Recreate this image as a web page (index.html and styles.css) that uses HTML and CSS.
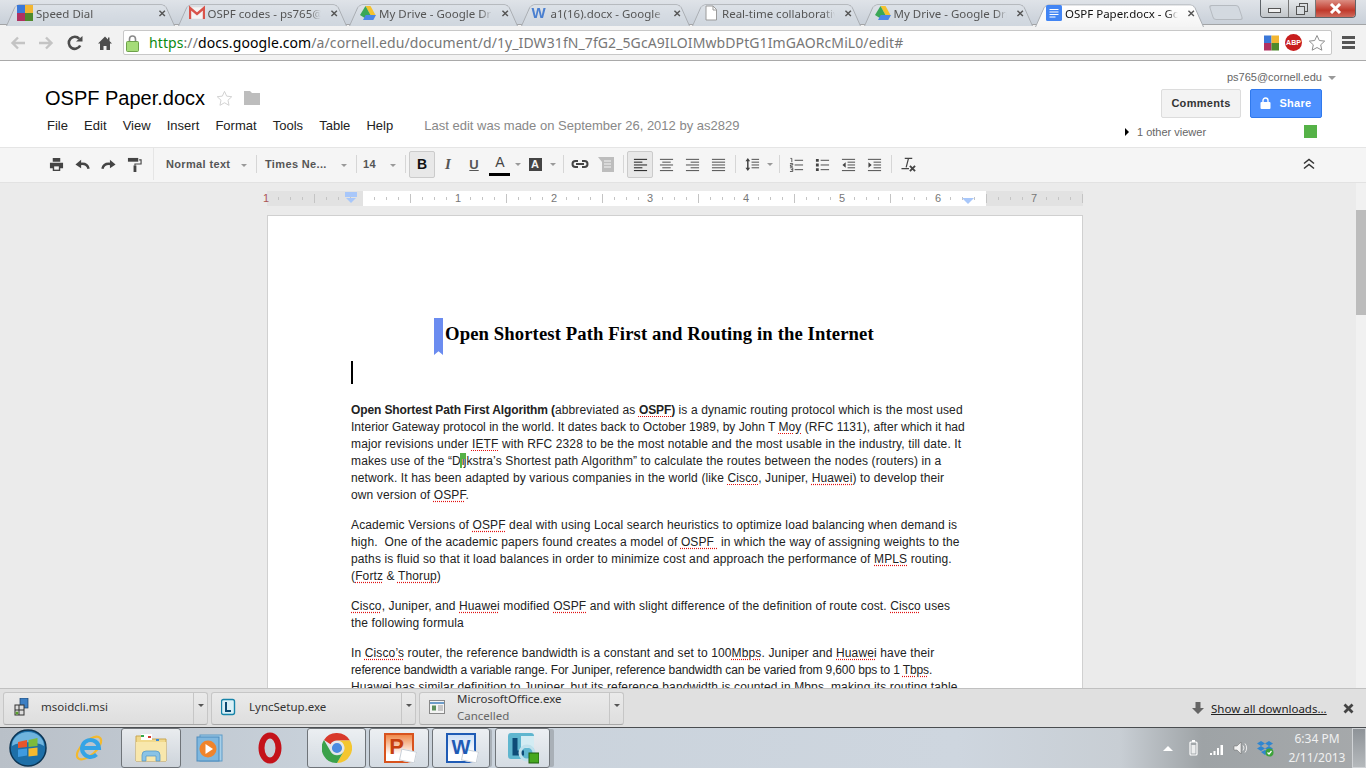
FILE: index.html
```html
<!DOCTYPE html>
<html lang="en">
<head>
    <meta charset="UTF-8">
    <title>OSPF Paper.docx - Google Drive</title>
    <link rel="stylesheet" href="styles.css">
</head>
<body>
    <!-- browser tabs -->
    <div class="tabstrip">
        <div class="tab">
            <svg class="favicon" viewBox="0 0 16 16"><rect x="0" y="0" width="8" height="8" fill="#3b78d8"/><rect x="8" y="0" width="8" height="8" fill="#f2b632"/><rect x="0" y="8" width="8" height="8" fill="#b03060"/><rect x="8" y="8" width="8" height="8" fill="#4f8a2c"/></svg>
            <span class="tab-title">Speed Dial</span>
            <span class="tab-close">✕</span>
        </div>
        <div class="tab">
            <svg class="favicon" viewBox="0 0 16 16"><rect x="0" y="2" width="16" height="12" fill="#f4f4f4" stroke="#d8d8d8" stroke-width=".5"/><path d="M1 14V3l7 6 7-6v11" fill="none" stroke="#d9534a" stroke-width="2.4"/></svg>
            <span class="tab-title">OSPF codes - ps765@</span>
            <span class="tab-close">✕</span>
        </div>
        <div class="tab">
            <svg class="favicon" viewBox="0 0 16 16"><path d="M5.500 1h5l5 9h-5z" fill="#f4c22e"/><path d="M5.500 1l5 9-2.700 5-7.800-5z" fill="#3aa757"/><path d="M3 15l2.700-5H16l-2.700 5z" fill="#4a86e8"/></svg>
            <span class="tab-title">My Drive - Google Dri</span>
            <span class="tab-close">✕</span>
        </div>
        <div class="tab">
            <span class="favicon word-fav">W</span>
            <span class="tab-title">a1(16).docx - Google</span>
            <span class="tab-close">✕</span>
        </div>
        <div class="tab">
            <svg class="favicon" viewBox="0 0 16 16"><path d="M3 1h7l3.500 3.500V15H3z" fill="#fff" stroke="#9a9a9a"/><path d="M10 1v4h3.500" fill="none" stroke="#9a9a9a"/></svg>
            <span class="tab-title">Real-time collaborativ</span>
            <span class="tab-close">✕</span>
        </div>
        <div class="tab">
            <svg class="favicon" viewBox="0 0 16 16"><path d="M5.500 1h5l5 9h-5z" fill="#f4c22e"/><path d="M5.500 1l5 9-2.700 5-7.800-5z" fill="#3aa757"/><path d="M3 15l2.700-5H16l-2.700 5z" fill="#4a86e8"/></svg>
            <span class="tab-title">My Drive - Google Dri</span>
            <span class="tab-close">✕</span>
        </div>
        <div class="tab tab-active">
            <svg class="favicon" viewBox="0 0 16 16"><rect width="16" height="16" rx="1.500" fill="#4285f4"/><path d="M3.500 4.500h9M3.500 7h9M3.500 9.500h9M3.500 12h6" stroke="#fff" stroke-width="1"/></svg>
            <span class="tab-title">OSPF Paper.docx - Go</span>
            <span class="tab-close">✕</span>
        </div>
        <div class="newtab"></div>
        <div class="winctl">
            <div class="win-btn win-min"><span class="min-glyph"></span></div>
            <div class="win-btn win-max">
                <svg width="12" height="12" viewBox="0 0 12 12"><rect x="3.500" y=".5" width="8" height="8" fill="none" stroke="#555"/><rect x=".5" y="3.500" width="8" height="8" fill="#d8dce0" stroke="#555"/></svg>
            </div>
            <div class="win-btn win-close">
                <svg width="13" height="11" viewBox="0 0 13 11"><path d="M2 1l9 9M11 1l-9 9" stroke="#fff" stroke-width="3"/></svg>
            </div>
        </div>
    </div>

    <!-- address bar -->
    <div class="browserbar">
        <svg class="nav-icon" viewBox="0 0 16 16"><path d="M15 8H3M8 2.500L2.500 8 8 13.500" fill="none" stroke="#c4c4c4" stroke-width="2.400"/></svg>
        <svg class="nav-icon" viewBox="0 0 16 16"><path d="M1 8h12M8 2.500L13.500 8 8 13.500" fill="none" stroke="#c4c4c4" stroke-width="2.400"/></svg>
        <svg class="nav-icon" viewBox="0 0 16 16"><path d="M13.200 10.500A6 6 0 1 1 12.300 3.800" fill="none" stroke="#4d4d4d" stroke-width="2.600"/><path d="M9 6.500h6.500V1z" fill="#4d4d4d"/></svg>
        <svg class="nav-icon" viewBox="0 0 16 16"><path d="M8 1.500L1 8.500h2V15h3.500v-4h3v4H13V8.500h2L12.500 6V2.500H11v2z" fill="#4d4d4d"/></svg>
        <div class="omnibox">
            <svg class="lock" width="13" height="18" viewBox="0 0 13 18"><path d="M3.500 8V5a3 3 0 0 1 6 0v3" fill="none" stroke="#8a8a8a" stroke-width="1.600"/><rect x=".5" y="7.500" width="12" height="10" rx="1" fill="#a5dc78" stroke="#6da14a"/></svg>
            <span class="url"><span class="url-https">https</span><span class="url-rest">://</span><span class="url-host">docs.google.com</span><span class="url-rest">/a/cornell.edu/document/d/1y_IDW31fN_7fG2_5GcA9ILOIMwbDPtG1ImGAORcMiL0/edit#</span></span>
            <div class="omni-icons">
                <svg width="15" height="16" viewBox="0 0 16 16"><rect x="0" y="0" width="8" height="8" fill="#3b78d8"/><rect x="8" y="0" width="8" height="8" fill="#f2b632"/><rect x="0" y="8" width="8" height="8" fill="#b03060"/><rect x="8" y="8" width="8" height="8" fill="#4f8a2c"/></svg>
                <span class="abp">ABP</span>
                <svg width="18" height="18" viewBox="0 0 18 18"><path d="M9 1.500l2.300 5 5.400.6-4 3.700 1.100 5.400L9 13.500l-4.800 2.700 1.100-5.400-4-3.700 5.400-.6z" fill="#fff" stroke="#8f8f8f"/></svg>
            </div>
        </div>
        <div class="hamburger"><i></i><i></i><i></i></div>
    </div>

    <!-- docs title area -->
    <div class="docs-header">
        <div class="docs-left">
            <div class="title-row">
                <span class="doc-title">OSPF Paper.docx</span>
                <svg class="title-star" width="17" height="17" viewBox="0 0 18 18"><path d="M9 1.500l2.300 5 5.400.6-4 3.700 1.100 5.400L9 13.500l-4.800 2.700 1.100-5.400-4-3.700 5.400-.6z" fill="#fff" stroke="#cfcfcf"/></svg>
                <svg class="title-folder" width="16" height="14" viewBox="0 0 16 14"><path d="M0 0h6l2 2h8v12H0z" fill="#bdbdbd"/></svg>
            </div>
            <div class="menu">
                <span>File</span><span>Edit</span><span>View</span><span>Insert</span><span>Format</span><span>Tools</span><span>Table</span><span>Help</span>
                <span class="last-edit">Last edit was made on September 26, 2012 by as2829</span>
            </div>
        </div>
        <div class="docs-right">
            <div class="account">ps765@cornell.edu <span class="account-caret"></span></div>
            <div class="share-row">
                <button class="btn-comments">Comments</button>
                <button class="btn-share">
                    <svg width="11" height="12" viewBox="0 0 11 12"><path d="M3 6V3.500a2.500 2.500 0 0 1 5 0V6" fill="none" stroke="#fff" stroke-width="1.400"/><rect x=".5" y="5" width="10" height="7" rx="1" fill="#fff"/></svg>
                    Share
                </button>
            </div>
            <div class="viewers">
                <span class="viewer-label"><span class="viewer-arrow"></span>1 other viewer</span>
                <span class="viewer-swatch"></span>
            </div>
        </div>
    </div>

    <!-- formatting toolbar -->
    <div class="toolbar">
        <span class="tool"><svg viewBox="0 0 16 16"><path d="M4 1h8v4H4zM1 6h14v6h-3v3H4v-3H1z" fill="#444"/><path d="M5.500 10h5v3.500h-5z" fill="#f5f5f5"/></svg></span>
        <span class="tool"><svg viewBox="0 0 16 16"><path d="M14.500 12.500C13.500 8.500 10 6.500 5 7.500" fill="none" stroke="#444" stroke-width="2.600"/><path d="M.5 8L6.500 3v9z" fill="#444"/></svg></span>
        <span class="tool"><svg viewBox="0 0 16 16"><path d="M1.500 12.500C2.500 8.500 6 6.500 11 7.500" fill="none" stroke="#444" stroke-width="2.600"/><path d="M15.500 8L9.500 3v9z" fill="#444"/></svg></span>
        <span class="tool"><svg viewBox="0 0 16 16"><path d="M1 1h11v4H1z" fill="#444"/><path d="M13 3h2v4.500H8.500V9" fill="none" stroke="#444" stroke-width="1.200"/><rect x="7" y="9" width="3" height="7" fill="#444"/></svg></span>
        <span class="sep sep-paint"></span>

        <span class="drop drop-style">Normal text<i class="caret"></i></span>
        <span class="sep"></span>
        <span class="drop drop-font">Times Ne...<i class="caret"></i></span>
        <span class="sep"></span>
        <span class="drop drop-size">14<i class="caret"></i></span>
        <span class="sep"></span>

        <span class="tool tool-on tool-bold"><b class="glyph-b">B</b></span>
        <span class="tool"><i class="glyph-i">I</i></span>
        <span class="tool"><span class="glyph-u">U</span></span>
        <span class="tool"><span class="glyph-a">A</span><span class="color-bar"></span></span>
        <i class="caret caret-tool"></i>
        <span class="tool"><span class="glyph-hl">A</span></span>
        <i class="caret caret-tool caret-wide"></i>
        <span class="sep sep-five"></span>

        <span class="tool tool-first"><svg viewBox="0 0 18 10" class="icon-wide"><path d="M7 2H4.500a3 3 0 0 0 0 6H7M11 2h2.500a3 3 0 0 1 0 6H11M5 5h8" fill="none" stroke="#444" stroke-width="2"/></svg></span>
        <span class="tool"><svg class="icon-comment" viewBox="0 0 16 16"><path d="M0 1h16v15H4V6z" fill="#bdbdbd"/><path d="M6 5h7M6 8h7M6 11h7" stroke="#f5f5f5"/></svg></span>
        <span class="sep sep-four"></span>

        <span class="tool tool-on tool-align"><svg viewBox="0 0 16 16"><path d="M1 2.500h14M1 5.500h9M1 8.500h14M1 11.500h9M1 14.500h14" stroke="#111"/></svg></span>
        <span class="tool"><svg viewBox="0 0 16 16"><path d="M1 2.500h14M3.500 5.500h9M1 8.500h14M3.500 11.500h9M1 14.500h14" stroke="#444"/></svg></span>
        <span class="tool"><svg viewBox="0 0 16 16"><path d="M1 2.500h14M6 5.500h9M1 8.500h14M6 11.500h9M1 14.500h14" stroke="#444"/></svg></span>
        <span class="tool"><svg viewBox="0 0 16 16"><path d="M1 2.500h14M1 5.500h14M1 8.500h14M1 11.500h14M1 14.500h14" stroke="#444"/></svg></span>
        <span class="sep sep-four"></span>

        <span class="tool tool-first"><svg viewBox="0 0 16 16"><path d="M3 1L.5 4.500h5zM3 15L.5 11.500h5z" fill="#444"/><path d="M3 4v8" stroke="#444" stroke-width="1.600"/><path d="M7 2.500h8M7 5.500h8M7 8.500h8M7 11.500h8" stroke="#444"/></svg></span>
        <i class="caret caret-tool"></i>
        <span class="sep sep-five"></span>

        <span class="tool tool-first"><svg viewBox="0 0 16 16"><path d="M6 3.500h9M6 8.500h9M6 13.500h9" stroke="#444"/><path d="M1.500 1.500h1.500v4M1 7h3v1.500H1.500v1.500H4M1 11.500h3v4H1M2 13.500h2" fill="none" stroke="#444" stroke-width=".9"/></svg></span>
        <span class="tool"><svg viewBox="0 0 16 16"><path d="M6 3.500h9M6 8.500h9M6 13.500h9" stroke="#444"/><path d="M1 2h3v3H1zM1 7h3v3H1zM1 12h3v3H1z" fill="#444"/></svg></span>
        <span class="tool"><svg viewBox="0 0 16 16"><path d="M1 2.500h14M7 5.500h8M7 8.500h8M7 11.500h8M1 14.500h14" stroke="#444"/><path d="M5 5.500v6L1.500 8.500z" fill="#444"/></svg></span>
        <span class="tool"><svg viewBox="0 0 16 16"><path d="M1 2.500h14M7 5.500h8M7 8.500h8M7 11.500h8M1 14.500h14" stroke="#444"/><path d="M1.500 5.500v6L5 8.500z" fill="#444"/></svg></span>
        <span class="sep sep-four"></span>

        <span class="tool tool-clear"><svg viewBox="0 0 16 16"><path d="M4 1.500h8M8 1.500L5.500 11M.5 12.500h8" fill="none" stroke="#444" stroke-width="1.300"/><path d="M9.500 9.500l5.500 5.500M15 9.500l-5.500 5.500" stroke="#444" stroke-width="2"/></svg></span>

        <span class="tool tool-collapse"><svg viewBox="0 0 12 12"><path d="M1 5.500l5-4 5 4M1 10.500l5-4 5 4" fill="none" stroke="#333" stroke-width="1.500"/></svg></span>
    </div>

    <!-- document -->
    <div class="editor">
        <div class="canvas">
            <div class="ruler">
                <div class="ruler-white"></div>
                <div class="ruler-ticks"></div>
                <div class="ruler-nums">
                    <span class="num-red">1</span><span class="num-zero"></span><span>1</span><span>2</span><span>3</span><span>4</span><span>5</span><span>6</span><span>7</span>
                </div>
                <svg class="marker marker-left" width="12" height="12" viewBox="0 0 12 12"><rect width="12" height="5" fill="#a8c7fa"/><path d="M1 6h10l-5 5z" fill="#a8c7fa"/></svg>
                <svg class="marker marker-right" width="12" height="6" viewBox="0 0 12 6"><path d="M0 0h12l-6 6z" fill="#a8c7fa"/></svg>
            </div>
            <div class="page">
                <h1 class="doc-heading"><span class="bookmark"></span>Open Shortest Path First and Routing in the Internet</h1>
                <div class="cursor"></div>
                <p><b class="lead">Open Shortest Path First Algorithm (</b>abbreviated as <b class="sp lead">OSPF</b><b class="lead">)</b> is a dynamic routing protocol which is the most used<br>
                <span class="ln-tight">Interior Gateway protocol in the world. It dates back to October 1989, by John T <span class="sp">Moy</span> (RFC 1131), after which it had</span><br>
                major revisions under <span class="sp">IETF</span> with RFC 2328 to be the most notable and the most usable in the industry, till date. It<br>
                makes use of the “D<span class="peer-cursor">i</span>jkstra’s Shortest path Algorithm” to calculate the routes between the nodes (routers) in a<br>
                network. It has been adapted by various companies in the world (like <span class="sp">Cisco</span>, Juniper, <span class="sp">Huawei</span>) to develop their<br>
                own version of <span class="sp">OSPF</span>.</p>
                <p>Academic Versions of <span class="sp">OSPF</span> deal with using Local search heuristics to optimize load balancing when demand is<br>
                high.&nbsp; One of the academic papers found creates a model of <span class="sp">OSPF&nbsp;</span> in which the way of assigning weights to the<br>
                paths is fluid so that it load balances in order to minimize cost and approach the performance of <span class="sp">MPLS</span> routing.<br>
                (<span class="sp">Fortz</span> &amp; <span class="sp">Thorup</span>)</p>
                <p><span class="sp">Cisco</span>, Juniper, and <span class="sp">Huawei</span> modified <span class="sp">OSPF</span> and with slight difference of the definition of route cost. <span class="sp">Cisco</span> uses<br>
                the following formula</p>
                <p>In <span class="sp">Cisco’s</span> router, the reference bandwidth is a constant and set to 100<span class="sp">Mbps</span>. Juniper and <span class="sp">Huawei</span> have their<br>
                <span class="ln-neg">reference bandwidth a variable range. For Juniper, reference bandwidth can be varied from 9,600 bps to 1 <span class="sp">Tbps</span>.</span><br>
                <span class="sp">Huawei</span> has similar definition to Juniper, but its reference bandwidth is counted in <span class="sp">Mbps</span>, making its routing table</p>
            </div>
        </div>
        <div class="scrollbar"><div class="scroll-thumb"></div></div>
    </div>

    <!-- chrome download shelf -->
    <div class="downloads">
        <div class="dl-item">
            <div class="dl-main">
                <svg class="dl-icon" width="16" height="18" viewBox="0 0 16 18"><rect x="7" y="0" width="8" height="10" fill="#3c7fc4" stroke="#1c3f66" stroke-width=".7"/><rect x="2" y="7" width="9" height="10" fill="#ddd" stroke="#333"/><path d="M6 7v10M2 12h9" stroke="#333"/><circle cx="4" cy="15" r="1.500" fill="#5aa02c"/></svg>
                <span class="dl-name">msoidcli.msi</span>
            </div>
            <div class="dl-arrow"><i class="caret caret-dark"></i></div>
        </div>
        <div class="dl-item">
            <div class="dl-main">
                <svg class="dl-icon" width="16" height="18" viewBox="0 0 16 18"><rect x=".5" y="1.500" width="13" height="15" rx="2" fill="#d9f0f7" stroke="#1683a8" stroke-width="1.400"/><path d="M5 4v9h5" fill="none" stroke="#0c4a72" stroke-width="2"/></svg>
                <span class="dl-name">LyncSetup.exe</span>
            </div>
            <div class="dl-arrow"><i class="caret caret-dark"></i></div>
        </div>
        <div class="dl-item">
            <div class="dl-main">
                <svg class="dl-icon" width="16" height="14" viewBox="0 0 16 14"><rect x=".5" y=".5" width="15" height="13" fill="#f4f4f4" stroke="#888"/><path d="M1 3h14" stroke="#6d9cc9" stroke-width="2"/><rect x="3" y="5.500" width="4" height="5" fill="#5e8f5e"/><path d="M9 6h5M9 8h5M9 10h5" stroke="#999"/></svg>
                <div class="dl-two">
                    <span class="dl-name">MicrosoftOffice.exe</span>
                    <span class="dl-status">Cancelled</span>
                </div>
            </div>
            <div class="dl-arrow"><i class="caret caret-dark"></i></div>
        </div>
        <svg class="show-all-icon" width="12" height="13" viewBox="0 0 12 13"><path d="M3.500 0h5v6H12l-6 6-6-6h3.500z" fill="#666"/></svg>
        <span class="show-all">Show all downloads...</span>
        <svg class="shelf-close" width="11" height="11" viewBox="0 0 11 11"><path d="M1.500 1.500l8 8M9.500 1.500l-8 8" stroke="#444" stroke-width="2.800"/></svg>
    </div>

    <!-- windows taskbar -->
    <div class="taskbar">
        <div class="orb">
            <svg width="38" height="38" viewBox="0 0 38 38">
                <circle cx="19" cy="19" r="18" fill="#1d6fa8" stroke="#0c3554" stroke-width="1.500"/>
                <path d="M3 17a16 14 0 0 1 32 0c-8-5-24-5-32 0z" fill="#6fb4de"/>
                <path d="M9 13l9-2v7l-9 1z" fill="#e8552b"/>
                <path d="M19.500 11l9-2 0 8-9 1z" fill="#7dbb3c"/>
                <path d="M9 20.500l9-1v7l-9 1.500z" fill="#3f9be0"/>
                <path d="M19.500 19.500l9-1v8l-9 1z" fill="#f6b92e"/>
            </svg>
        </div>
        <div class="task task-ie">
            <svg width="32" height="32" viewBox="0 0 32 32"><ellipse cx="15" cy="16" rx="15" ry="7" transform="rotate(-42 15 16)" fill="none" stroke="#f4b92d" stroke-width="2.200"/><path d="M8 16h17a8.500 8.500 0 1 0-2.500 6.500" fill="none" stroke="#35a4e6" stroke-width="4"/></svg>
        </div>
        <div class="task task-on task-explorer">
            <svg width="32" height="30" viewBox="0 0 32 30"><path d="M1 3h12l2 3h16v22H1z" fill="#f1d98c" stroke="#c9a651"/><path d="M6 1h11v6H6z" fill="#fff"/><rect x="6" y="2" width="3" height="2" fill="#35a84a"/><rect x="13" y="3" width="3" height="2" fill="#d23b2c"/><rect x="21" y="6" width="3" height="2" fill="#3b89d8"/><path d="M1 9h30v19H1z" fill="#f8e7ac"/><path d="M7 28v-6q0-4 4-4h10q4 0 4 4v6h-4v-5H11v5z" fill="#8ac3e6" stroke="#4f94c4" stroke-width=".7"/></svg>
        </div>
        <div class="task task-wmp">
            <svg width="30" height="30" viewBox="0 0 30 30"><rect x="4" y="2" width="22" height="26" fill="#a7cfe8" stroke="#5d9bc8"/><rect x="1" y="4" width="22" height="24" fill="#7fb7de" stroke="#4c8bbd"/><circle cx="12" cy="16" r="8.500" fill="#f0842c"/><path d="M9.500 11l7.500 5-7.500 5z" fill="#fff"/></svg>
        </div>
        <div class="task task-opera">
            <svg width="24" height="32" viewBox="0 0 24 32"><ellipse cx="12" cy="16" rx="8.500" ry="12.500" fill="none" stroke="#c4121a" stroke-width="6"/></svg>
        </div>
        <div class="task task-on task-chrome">
            <svg width="30" height="30" viewBox="0 0 30 30">
                <path d="M15 0a15 15 0 0 1 13 7.500H15a7.500 7.500 0 0 0-6.500 3.750L2 7A15 15 0 0 1 15 0z" fill="#d8392b"/>
                <path d="M28 7.500A15 15 0 0 1 15 30l6.500-11.250A7.500 7.500 0 0 0 21.500 11.250 7.500 7.500 0 0 0 15 7.500z" fill="#f4c630"/>
                <path d="M2 7l6.500 11.250A7.500 7.500 0 0 0 21.500 18.750L15 30A15 15 0 0 1 2 7z" fill="#3ba14a"/>
                <circle cx="15" cy="15" r="5.800" fill="#4c8be0" stroke="#e8e8e8" stroke-width="1.400"/>
            </svg>
        </div>
        <div class="task task-on task-ppt">
            <div class="app-tile tile-ppt"><span class="tile-letter">P</span></div>
        </div>
        <div class="task task-on task-word">
            <div class="app-tile tile-word"><span class="tile-letter">W</span></div>
        </div>
        <div class="task task-on task-lync">
            <svg width="32" height="32" viewBox="0 0 32 32"><rect x="1" y="1" width="26" height="26" rx="3" fill="#5fb6cf"/><rect x="14" y="4" width="13" height="12" fill="#d3ecf3"/><path d="M8 6v15h9" fill="none" stroke="#0e4c78" stroke-width="5"/><circle cx="20" cy="21" r="7" fill="none" stroke="#bfe1ec" stroke-width="3"/><rect x="22" y="21" width="10" height="10" fill="#46a820" stroke="#1d5c10"/></svg>
        </div>
        <div class="tray">
            <span class="tray-up"></span>
            <svg class="tray-battery" width="9" height="16" viewBox="0 0 9 16"><rect x="1" y="2" width="7" height="13" rx="1" fill="none" stroke="#fff" stroke-width="1.200"/><rect x="2.500" y="5" width="4" height="8.500" fill="#fff" opacity=".8"/><rect x="3" y="0" width="3" height="2" fill="#fff"/></svg>
            <svg width="16" height="13" viewBox="0 0 16 13"><path d="M1 11h2v2H1zM4.500 9h2v4h-2zM8 6h2v7H8zM11.500 3h2.500v10h-2.500z" fill="#fff"/></svg>
            <svg width="15" height="14" viewBox="0 0 15 14"><path d="M1 5h3l4-4v12L4 9H1z" fill="#f2f2f2" stroke="#666" stroke-width=".5"/><path d="M10 4.500a4 4 0 0 1 0 5M12 2.500a7 7 0 0 1 0 9" fill="none" stroke="#eee"/></svg>
            <svg width="18" height="17" viewBox="0 0 18 17"><path d="M5 1l4 2.500L5 6 1 3.500zM13 1l4 2.500L13 6 9 3.500zM5 6l4 2.500L5 11 1 8.500zM13 6l4 2.500L13 11 9 8.500z" fill="#2f86d0"/><path d="M5 12l4-2 4 2-4 3z" fill="#2f86d0"/><circle cx="13.500" cy="12.500" r="4" fill="#3da33a"/><path d="M11.500 12.500l1.500 1.500 2.500-3" fill="none" stroke="#fff" stroke-width="1.200"/></svg>
            <div class="clock"><span>6:34 PM</span><span>2/11/2013</span></div>
        </div>
        <div class="show-desktop"></div>
    </div>
</body>
</html>
```

FILE: styles.css
```css
* {
    box-sizing: border-box;
}

html, body {
    height: 100%;
}

body {
    margin: 0;
    width: 1366px;
    height: 768px;
    overflow: hidden;
    display: flex;
    flex-direction: column;
    font-family: "Liberation Sans", Arial, sans-serif;
    background-color: #fff;
}

/* browser tabs */
.tabstrip {
    height: 25px;
    flex: none;
    display: flex;
    padding-left: 3px;
    background: linear-gradient(#dfe3e8, #c9d0d9);
    border-bottom: 1px solid #a2a4a6;
    font-family: "Noto Sans", sans-serif;
}

.tab {
    position: relative;
    width: 175px;
    height: 25px;
    margin-right: -3.5px;
    padding: 1px 10px 0 14px;
    display: flex;
    align-items: center;
    font-size: 11.500px;
    color: #555;
}

.tab::before {
    content: "";
    position: absolute;
    left: 3px;
    right: 3px;
    top: 1px;
    bottom: -1px;
    background: linear-gradient(#dce1e7, #cfd6de);
    border: 1px solid #a9adb2;
    border-bottom: none;
    border-radius: 5px 5px 0 0;
    transform: perspective(40px) rotateX(12deg);
    transform-origin: bottom;
}

.tab-active {
    color: #111;
    z-index: 1;
}

.tab-active::before {
    background: linear-gradient(#fff, #f4f4f4);
    bottom: -2px;
}

.favicon {
    position: relative;
    flex: none;
    width: 16px;
    height: 16px;
}

.word-fav {
    font-family: "Liberation Sans", sans-serif;
    font-weight: bold;
    font-size: 15px;
    line-height: 16px;
    color: #4a7fd0;
}

.tab-title {
    position: relative;
    flex: 1;
    margin-left: 3px;
    white-space: nowrap;
    overflow: hidden;
    -webkit-mask-image: linear-gradient(to right, #000 90%, transparent);
    mask-image: linear-gradient(to right, #000 90%, transparent);
}

.tab-close {
    position: relative;
    flex: none;
    width: 12px;
    margin-left: 7px;
    font-size: 10px;
    font-weight: bold;
    color: #555;
    text-align: center;
}

.newtab {
    width: 30px;
    height: 15px;
    margin: 5px 0 0 7px;
    background: #d3d9e0;
    border: 1px solid #b5bac0;
    border-radius: 3px;
    transform: skewX(18deg);
}

.winctl {
    width: 96px;
    height: 18px;
    margin-left: auto;
    margin-right: 10px;
    display: flex;
    border: 1px solid #5e6368;
    border-top: none;
    border-radius: 0 0 4px 4px;
    overflow: hidden;
}

.win-btn {
    display: flex;
    align-items: center;
    justify-content: center;
    background: linear-gradient(#e5e8eb, #c2c6ca);
}

.win-min {
    width: 28px;
    border-right: 1px solid #777;
}

.win-max {
    width: 27px;
    border-right: 1px solid #777;
}

.win-close {
    flex: 1;
    background: linear-gradient(#dc8d82, #c0392b 60%, #cf6a5c);
}

.min-glyph {
    width: 13px;
    height: 5px;
    margin-top: 4px;
    background: #f2f2f2;
    border: 1px solid #555;
}

/* address bar */
.browserbar {
    height: 36px;
    flex: none;
    display: flex;
    align-items: center;
    padding-left: 10px;
    background: #f2f2f2;
    border-bottom: 1px solid #a9a9a9;
}

.nav-icon {
    width: 16px;
    height: 16px;
    margin-right: 12px;
}

.nav-icon:nth-child(2) {
    margin-right: 13px;
}

.nav-icon:nth-child(3) {
    margin-right: 14px;
}

.nav-icon:nth-child(4) {
    margin-right: 10px;
}

.omnibox {
    width: 1209px;
    height: 25px;
    padding-left: 2px;
    display: flex;
    align-items: center;
    background: #fff;
    border: 1px solid #c8c8c8;
    border-radius: 2px;
}

.lock {
    flex: none;
}

.url {
    margin-left: 10px;
    font-family: "Noto Sans", sans-serif;
    font-size: 14px;
    letter-spacing: .09px;
    white-space: nowrap;
}

.url-https {
    color: #0a8a12;
}

.url-host {
    color: #000;
}

.url-rest {
    color: #777;
}

.omni-icons {
    margin-left: auto;
    margin-right: 5px;
    display: flex;
    align-items: center;
    gap: 6px;
}

.abp {
    width: 17px;
    height: 17px;
    border-radius: 50%;
    background: #c81e1e;
    color: #fff;
    font-size: 7px;
    font-weight: bold;
    line-height: 17px;
    text-align: center;
}

.hamburger {
    width: 13px;
    margin-left: 10px;
    display: flex;
    flex-direction: column;
    gap: 2px;
}

.hamburger i {
    height: 3px;
    background: #555;
}

/* docs title area */
.docs-header {
    height: 86px;
    flex: none;
    display: flex;
    justify-content: space-between;
    background: #fff;
}

.docs-left {
    padding: 25px 0 0 45px;
}

.title-row {
    display: flex;
    align-items: center;
    height: 24px;
}

.doc-title {
    font-size: 20px;
    color: #000;
}

.title-star {
    margin-left: 11px;
}

.title-folder {
    margin-left: 11px;
}

.menu {
    display: flex;
    gap: 16.150px;
    margin-top: 8px;
    margin-left: 2px;
    font-size: 13px;
    color: #222;
}

.menu .last-edit {
    margin-left: 15px;
    color: #888;
}

.docs-right {
    padding: 10px 44px 0 0;
    display: flex;
    flex-direction: column;
    align-items: flex-end;
}

.account {
    height: 13px;
    font-size: 11px;
    line-height: 13px;
    color: #666;
    margin-right: -14px;
}

.account-caret {
    display: inline-block;
    width: 0;
    height: 0;
    margin-left: 3px;
    vertical-align: 1px;
    border: 4px solid transparent;
    border-top-color: #999;
    border-bottom: none;
}

.share-row {
    display: flex;
    gap: 9px;
    margin-top: 5px;
}

.btn-comments, .btn-share {
    height: 29px;
    border-radius: 2px;
    font-family: "Liberation Sans", sans-serif;
    font-size: 11px;
    font-weight: bold;
    letter-spacing: .3px;
    padding: 0 0 2px;
}

.btn-comments {
    width: 80px;
    color: #333;
    background: #f3f3f3;
    border: 1px solid #dcdcdc;
}

.btn-share {
    width: 72px;
    color: #fff;
    background: #4d90fe;
    border: 1px solid #3079ed;
    display: flex;
    align-items: center;
    justify-content: center;
    gap: 8px;
}

.viewers {
    width: 192px;
    margin-top: 7px;
    margin-right: 5px;
    display: flex;
    justify-content: space-between;
    align-items: center;
    height: 13px;
}

.viewer-label {
    font-size: 11px;
    color: #666;
    display: flex;
    align-items: center;
}

.viewer-arrow {
    width: 0;
    height: 0;
    margin-right: 8px;
    border: 4px solid transparent;
    border-left-color: #000;
    border-right: none;
}

.viewer-swatch {
    width: 13px;
    height: 13px;
    background: #55b247;
}

/* formatting toolbar */
.toolbar {
    height: 36px;
    flex: none;
    display: flex;
    align-items: center;
    padding: 0 0 2px 43px;
    background: #f5f5f5;
    border-top: 1px solid #e5e5e5;
    border-bottom: 1px solid #e2e2e2;
}

.tool {
    position: relative;
    flex: none;
    width: 26px;
    height: 27px;
    display: flex;
    align-items: center;
    justify-content: center;
    color: #444;
    border: 1px solid transparent;
    border-radius: 2px;
}

.tool svg {
    width: 15px;
    height: 15px;
}

.tool svg.icon-wide {
    width: 18px;
    height: 10px;
}

.tool svg.icon-comment {
    width: 18px;
    height: 16px;
}

.tool-on {
    background: #e8e8e8;
    border-color: #cbcbcb;
    color: #111;
}

.tool-bold {
    margin-left: 3px;
}

.tool-first {
    margin-left: 3px;
}

.tool-align {
    margin-left: 3px;
}

.tool-clear {
    margin-left: 3px;
}

.tool-collapse {
    margin-left: auto;
    margin-right: 44px;
}

.tool-collapse svg {
    width: 12px;
    height: 12px;
}

.sep {
    flex: none;
    width: 1px;
    height: 18px;
    background: #d6d6d6;
}

.sep-paint {
    height: 32px;
    margin-left: 6px;
    background: #e5e5e5;
}

.sep-five {
    margin-left: 5px;
}

.sep-four {
    margin-left: 4px;
}

.drop {
    position: relative;
    flex: none;
    font-size: 11px;
    font-weight: bold;
    letter-spacing: .35px;
    color: #555;
}

.drop-style {
    width: 102px;
    padding-left: 12px;
}

.drop-font {
    width: 99px;
    padding-left: 8px;
}

.drop-size {
    width: 48px;
    padding-left: 6px;
}

.caret {
    display: block;
    width: 0;
    height: 0;
    border: 3px solid transparent;
    border-top: 3px solid #999;
    border-bottom: none;
}

.drop .caret {
    position: absolute;
    right: 9px;
    top: 6px;
}

.caret-tool {
    flex: none;
    margin: 0 1.500px;
}

.caret-wide {
    margin: 0 2px;
}

.glyph-b {
    font-family: "Liberation Sans", sans-serif;
    font-size: 14px;
    color: #111;
}

.glyph-i {
    font-family: "Liberation Serif", serif;
    font-size: 15px;
    font-weight: bold;
    color: #555;
}

.glyph-u {
    font-size: 13px;
    font-weight: bold;
    color: #555;
    text-decoration: underline;
}

.glyph-a {
    font-size: 14px;
    margin-bottom: 5px;
    color: #444;
}

.color-bar {
    position: absolute;
    left: 1px;
    bottom: 1px;
    width: 21px;
    height: 3px;
    background: #000;
}

.glyph-hl {
    width: 13px;
    height: 13px;
    background: #444;
    color: #f5f5f5;
    font-size: 11px;
    font-weight: bold;
    line-height: 13px;
    text-align: center;
}

/* document */
.editor {
    flex: 1;
    min-height: 0;
    display: flex;
    overflow: hidden;
    background: #ebebeb;
}

.canvas {
    flex: 1;
    padding: 8px 0 0 267px;
}

.ruler {
    position: relative;
    width: 816px;
    height: 15px;
    margin-bottom: 9px;
    background: #e2e2e2;
}

.ruler-white {
    position: absolute;
    left: 96px;
    top: 0;
    width: 623px;
    height: 15px;
    background: #fff;
}

.ruler-ticks {
    position: absolute;
    left: 0;
    top: 3px;
    width: 816px;
    height: 9px;
    background:
        repeating-linear-gradient(to right, transparent 0 47px, #c4c4c4 47px 48px, transparent 48px 96px),
        repeating-linear-gradient(to right, transparent 0 11px, #c4c4c4 11px 12px, transparent 12px 23px, #c4c4c4 23px 24px, transparent 24px 35px, #c4c4c4 35px 36px, transparent 36px 59px, #c4c4c4 59px 60px, transparent 60px 71px, #c4c4c4 71px 72px, transparent 72px 83px, #c4c4c4 83px 84px, transparent 84px 96px) 0 3px / 100% 3px no-repeat;
}

.ruler-nums {
    position: absolute;
    left: -49px;
    top: 0;
    display: flex;
    font-size: 11px;
    line-height: 15px;
    color: #777;
}

.ruler-nums span {
    width: 96px;
    text-align: center;
}

.ruler-nums .num-red {
    color: #a55;
}

.ruler-nums .num-zero {
    width: 96px;
}

.marker {
    position: absolute;
}

.marker-left {
    left: 78px;
    top: 1px;
}

.marker-right {
    left: 695px;
    top: 7px;
}

.page {
    width: 816px;
    height: 500px;
    padding: 106px 0 0 83px;
    background: #fff;
    border: 1px solid #d0d0d0;
    font-size: 12px;
    line-height: 17px;
    letter-spacing: .13px;
    color: #222;
}

.doc-heading {
    position: relative;
    margin: 0 0 0 94px;
    font-family: "Liberation Serif", serif;
    font-size: 18.700px;
    line-height: 24px;
    letter-spacing: .1px;
    color: #000;
    white-space: nowrap;
}

.bookmark {
    position: absolute;
    left: -11px;
    top: -4px;
    width: 9px;
    height: 37px;
    background: #6b8cf0;
    clip-path: polygon(0 0, 100% 0, 100% 100%, 50% 90%, 0 100%);
}

.cursor {
    width: 2px;
    height: 23px;
    margin-top: 15px;
    background: #000;
}

.page p {
    margin: 13px 0;
    white-space: nowrap;
}

.page .cursor + p {
    margin-top: 18px;
}

.lead {
    letter-spacing: -.12px;
}

.ln-tight {
    letter-spacing: .03px;
}

.ln-neg {
    letter-spacing: -.13px;
}

.sp {
    text-decoration: underline dotted #e01010;
    text-underline-offset: 2px;
}

.peer-cursor {
    position: relative;
    border-left: 2px solid #55b247;
    margin-left: -1px;
    margin-right: -1px;
}

.peer-cursor::before {
    content: "";
    position: absolute;
    left: -2px;
    top: -1px;
    width: 6px;
    height: 6px;
    background: #55b247;
}

.scrollbar {
    flex: none;
    width: 10px;
    padding-top: 27px;
    background: #f1f1f1;
}

.scroll-thumb {
    height: 105px;
    background: #bcbcbc;
}

/* chrome download shelf */
.downloads {
    height: 39px;
    flex: none;
    position: relative;
    display: flex;
    align-items: center;
    padding-left: 3px;
    background: #e0e0e0;
    border-top: 1px solid #c0c0c0;
    font-family: "Noto Sans", sans-serif;
    font-size: 11.500px;
    color: #333;
}

.dl-item {
    width: 205px;
    height: 33px;
    margin-right: 3px;
    display: flex;
    background: linear-gradient(#eaeaea, #dedede);
    border: 1px solid #c6c6c6;
    border-bottom-color: #a8a8a8;
    border-radius: 3px;
}

.dl-main {
    flex: 1;
    display: flex;
    align-items: center;
    padding: 0 0 3px 9px;
    gap: 12px;
}

.dl-arrow {
    width: 14px;
    padding: 11px 0 0 4px;
    border-left: 1px solid #c6c6c6;
}

.caret-dark {
    border-top-color: #555;
}

.dl-two {
    display: flex;
    flex-direction: column;
    line-height: 17px;
}

.dl-status {
    color: #666;
}

.show-all-icon {
    margin-left: 565px;
}

.show-all {
    margin-left: 7px;
    text-decoration: underline;
    color: #222;
}

.shelf-close {
    margin-left: 16px;
}

/* windows taskbar */
.taskbar {
    height: 41px;
    flex: none;
    display: flex;
    align-items: center;
    background: linear-gradient(to right, #b9c0c8 0, #c9d2db 25%, #ced6df 70%, #c8ced4 82%, #9ea3a6 88%, #a6a9ab 100%);
    border-top: 1px solid #4a4d50;
}

.orb {
    width: 58px;
    display: flex;
    justify-content: center;
    padding-right: 3px;
}

.task {
    flex: none;
    width: 60px;
    height: 40px;
    display: flex;
    align-items: center;
    justify-content: center;
}

.task-on {
    background: linear-gradient(rgba(255,255,255,.65), rgba(255,255,255,.2));
    border: 1px solid #6f7479;
    border-radius: 3px;
}

.task-ie {
    width: 63px;
}

.task-wmp {
    width: 59px;
}

.task-opera {
    width: 60px;
}

.task-chrome {
    width: 59px;
    margin-left: 7px;
}

.task-ppt {
    width: 60px;
    margin-left: 3px;
}

.task-word {
    width: 58px;
    margin-left: 3px;
    box-shadow: 3px 0 0 -1px #a9b0b7;
}

.task-lync {
    width: 55px;
    margin-left: 5px;
    box-shadow: 5px 0 0 -1px #a9b0b7;
}

.app-tile {
    position: relative;
    width: 30px;
    height: 30px;
    font-family: "Liberation Sans", sans-serif;
    font-weight: bold;
    line-height: 24px;
    text-align: center;
}

.app-tile::after {
    content: "";
    position: absolute;
    right: -4px;
    bottom: -1px;
    width: 14px;
    height: 10px;
    background: #fff;
    border: 1px solid #c9d0d8;
    transform: rotate(12deg);
}

.tile-letter {
    position: relative;
    z-index: 1;
}

.tile-ppt {
    padding-right: 5px;
    background: linear-gradient(#f08a4b, #fff 75%);
    border: 2px solid #d8531e;
    color: #c8400f;
    font-size: 22px;
}

.tile-word {
    background: linear-gradient(#cfe0f6, #fff 75%);
    border: 2px solid #1f5bb5;
    color: #1f5bb5;
    font-size: 20px;
}

.tray {
    margin-left: auto;
    display: flex;
    align-items: center;
    gap: 8px;
}

.tray-up {
    width: 0;
    height: 0;
    margin-right: 7.500px;
    border: 5px solid transparent;
    border-bottom-color: #fff;
    border-top: none;
}

.tray-battery {
    margin-right: 3.500px;
}

.clock {
    width: 70px;
    display: flex;
    flex-direction: column;
    align-items: center;
    font-family: "Noto Sans", sans-serif;
    font-size: 12px;
    line-height: 19px;
    color: #f0f0f0;
}

.show-desktop {
    width: 14px;
    height: 40px;
    margin-left: 0;
    background: linear-gradient(#8e9398, #b5b9bc);
    border: 1px solid #d0d3d6;
}
```
